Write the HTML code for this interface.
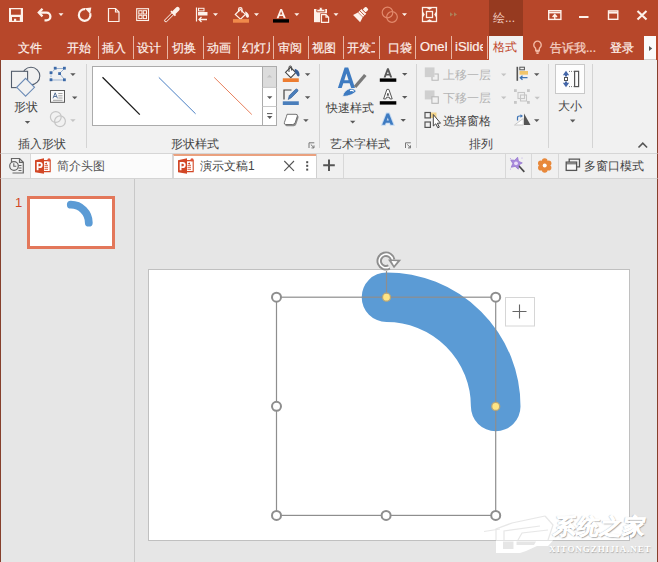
<!DOCTYPE html>
<html><head><meta charset="utf-8">
<style>
*{margin:0;padding:0;box-sizing:border-box}
html,body{width:658px;height:562px;overflow:hidden;background:#e6e6e6;font-family:"Liberation Sans",sans-serif;}
.a{position:absolute}
.t{position:absolute;white-space:nowrap;line-height:1}
#title{left:0;top:0;width:658px;height:36px;background:#b7472a}
#tabs{left:0;top:36px;width:658px;height:24px;background:#b7472a}
.tab{color:#fdf0ea;font-size:12px;top:41.5px;-webkit-text-stroke:0.2px #fdf0ea}
.sep{position:absolute;top:36px;width:1px;height:23px;background:#e9b4a2}
#ribbon{left:0;top:60px;width:658px;height:94px;background:#f1f1f1;border-left:1px solid #86402c;border-right:1px solid #86402c;border-bottom:1px solid #d6d6d6}
.gsep{position:absolute;top:64px;width:1px;height:84px;background:#d4d4d4}
.lbl{color:#444;font-size:12px}
#dtabs{left:0;top:154px;width:658px;height:25px;background:#f0f0f0;border-bottom:1px solid #d4d4d4;border-left:1px solid #86402c;border-right:1px solid #86402c}
#main{left:0;top:179px;width:658px;height:383px;background:#e6e6e6;border-left:1px solid #86402c;border-right:1px solid #86402c}
</style></head><body>
<div id="title" class="a"></div>
<div id="tabs" class="a"></div>
<svg class="a" style="left:0;top:0" width="658" height="36" viewBox="0 0 658 36">
<g fill="none" stroke="#fdf1ea" stroke-width="2">
<!-- save -->
<path fill="#fdf1ea" stroke="none" fill-rule="evenodd" d="M9 8H23V22H9Z M11 9.3H20.8V14.7H11Z M12 17H19.8V20.7H16.2V18.8H14V20.7H12Z"/>
<!-- undo -->
<path d="M42.5 8.8L38.8 12.6L42.5 16.4" stroke-width="2.3"/>
<path d="M39.2 12.6H46.5A3.9 3.9 0 0 1 46.5 20.4H44.5" stroke-width="2.3"/>
<!-- refresh -->
<path d="M85.2 9.2A5.8 5.8 0 1 0 90.2 13.3" stroke-width="2.2"/>
<!-- new doc -->
<path d="M108.5 8.5H115.5L119 12V21.5H108.5Z" stroke-width="1.2"/>
<path d="M115.5 8.5V12H119" stroke-width="1.2"/>
<!-- grid -->
<rect x="136.7" y="8.7" width="11.8" height="11.8" stroke-width="1.1"/>
<rect x="138.8" y="10.7" width="3.2" height="3.3" stroke-width="1"/>
<rect x="143.3" y="10.7" width="3.2" height="3.3" stroke-width="1"/>
<rect x="138.8" y="15.3" width="3.2" height="3.3" stroke-width="1"/>
<rect x="143.3" y="15.3" width="3.2" height="3.3" stroke-width="1"/>
<!-- eyedropper -->
<path d="M172.1 12.6L164.6 20.1Q164.2 21.9 166.4 21.9L173.9 14.4" stroke-width="1" fill="none"/>
<path d="M171 11.2L175.5 15.7" stroke-width="1.9"/>
<path d="M174.3 12.3L177.6 9" stroke-width="4.2" stroke-linecap="round"/>
<!-- align -->
<path d="M196.5 7.5V21.5" stroke-width="1.2"/>
<rect x="198.5" y="8.3" width="5.5" height="2.6" stroke-width="1"/>
<path d="M207 19.5H199M201.5 17L199 19.5L201.5 22" stroke-width="1.3"/>
<!-- A -->


<!-- frame -->
<rect x="422.5" y="7.5" width="14" height="14" stroke-width="1.3"/>
<rect x="426.5" y="11.5" width="6" height="6" stroke-width="1.3"/>
</g>
<g fill="#fdf1ea">
<path d="M198 12h9.5v3.5H198z"/>
<path d="M58.5 13.3h5l-2.5 2.6z"/>
<path d="M213 13.3h5l-2.5 2.6z"/>
<path d="M254 13.3h5l-2.5 2.6z"/>
<path d="M294.3 13.3h5l-2.5 2.6z"/>
<path d="M333.5 13.3h5l-2.5 2.6z"/>
<path d="M402 13.3h5l-2.5 2.6z"/>
<path d="M84.8 8.2L91.3 7.6L90.2 14z"/>
<g transform="translate(361.2 14) rotate(-45)"><rect x="4" y="-2.1" width="4.5" height="4.2" rx="1.2"/><rect x="-0.8" y="-3.4" width="4.6" height="6.8"/><path d="M-1.3 -3.4V3.4L-6.5 5V-5Z"/></g>
<g transform="translate(361.2 14) rotate(-45)" stroke="#b7472a" stroke-width="0.8"><path d="M1.3 -3.6V3.6M3.9 -2.2V2.2"/></g>
<!-- clipboard -->
<rect x="314" y="9" width="13" height="13.2"/>
<path d="M316.8 11.8V9.3H319.3V7.3H322.2V9.3H324.8V11.8Z" stroke="#b7472a" stroke-width="0.9"/>
<rect x="320.2" y="13.3" width="9.6" height="10.2" fill="#b7472a"/>
<path d="M321.5 14.6H326L328.6 17.2V22.3H321.5Z M326 14.6V17.2H328.6" fill="none" stroke="#fdf1ea" stroke-width="1.2"/>
<path d="M426 7.5h7l-3.5 2.3zM426 21.5h7l-3.5-2.3zM422.5 11h0v7l2.3-3.5zM436.5 11v7l-2.3-3.5z"/>
</g>
<!-- fill bucket -->
<path d="M235.3 14.5L240.4 9.4L245.4 14.4L240.5 19.2Z" fill="none" stroke="#fdf1ea" stroke-width="1.2"/>
<path d="M238.6 12V9.3Q238.6 7.6 240.3 7.6Q242 7.6 242 9.3V12.5" fill="none" stroke="#fdf1ea" stroke-width="1.3"/>
<path d="M245.2 11.2Q248.8 13 249 16.2Q248.6 18 247 17.8Q245.6 16.5 245.4 14.5Z" fill="#fdf1ea"/>
<rect x="233" y="19.1" width="16" height="3.6" fill="#f08a4b"/>
<rect x="273" y="19.2" width="16" height="3.4" fill="#000"/>
<path fill-rule="evenodd" fill="#fdf1ea" d="M276.6 18.3L280.3 8.9H282L285.8 18.3H283.7L282.9 16.1H279.4L278.6 18.3ZM280 14.5H282.3L281.15 11.3Z"/>
<!-- disabled circles -->
<g fill="none" stroke="#e2896c" stroke-width="1.2">
<circle cx="387.5" cy="12.5" r="5.3"/>
<circle cx="392" cy="17" r="5.3"/>
</g>
<g fill="#a89a6e" opacity="0.7">
<path d="M450 12.2l3 2.2l-3 2.2zM454 12.2l3 2.2l-3 2.2z"/>
</g>
<!-- window controls -->
<g fill="none" stroke="#fdf1ea" stroke-width="1.4">
<rect x="548.7" y="10.7" width="12.2" height="8.7"/>
<path d="M548.7 12.6H560.9" stroke-width="1.6"/>
<path d="M554.8 19.3V14.8M552.6 17L554.8 14.7L557 17" stroke-width="1.5"/>
<rect x="608.5" y="10.9" width="9.3" height="8.4"/>
<path d="M608.5 12.6H617.8" stroke-width="2"/>
<path d="M637.5 11L646.5 19.6M646.5 11L637.5 19.6" stroke-width="2.1"/>
</g>
<rect x="579" y="16" width="9.5" height="2" fill="#fdf1ea"/>
</svg>

<div class="a" style="left:489px;top:0;width:34px;height:36px;background:#963a20"></div>
<div class="t" style="left:493px;top:12px;font-size:12px;color:#f3cfc2">绘...</div>
<div class="a" style="left:489px;top:36px;width:34px;height:24px;background:#f1f1f1"></div>
<div class="t" style="left:493px;top:41px;font-size:12px;color:#c0452a">格式</div>

<div class="t tab" style="left:18px">文件</div>
<div class="t tab" style="left:67px">开始</div>
<div class="sep" style="left:98px"></div>
<div class="t tab" style="left:102px">插入</div>
<div class="sep" style="left:133px"></div>
<div class="t tab" style="left:137px">设计</div>
<div class="sep" style="left:167px"></div>
<div class="t tab" style="left:172px">切换</div>
<div class="sep" style="left:203px"></div>
<div class="t tab" style="left:207px">动画</div>
<div class="sep" style="left:238px"></div>
<div class="t tab" style="left:242px;width:27.5px;height:14px;overflow:hidden">幻灯片</div>
<div class="sep" style="left:273px"></div>
<div class="t tab" style="left:278px">审阅</div>
<div class="sep" style="left:308px"></div>
<div class="t tab" style="left:312px">视图</div>
<div class="sep" style="left:343px"></div>
<div class="t tab" style="left:347px;width:28px;overflow:hidden">开发工具</div>
<div class="sep" style="left:379px"></div>
<div class="t tab" style="left:388px">口袋</div>
<div class="sep" style="left:415px"></div>
<div class="t tab" style="left:420px;top:40px;width:27px;height:16px;overflow:hidden;font-size:13px">OneKey</div>
<div class="sep" style="left:451px"></div>
<div class="t tab" style="left:455px;top:40px;width:28px;height:16px;overflow:hidden;font-size:13px">iSlide</div>
<div class="sep" style="left:487px"></div>
<svg class="a" style="left:526px;top:36px" width="20" height="24"><g fill="none" stroke="#f2b8a3" stroke-width="1.4"><path d="M9.7 14.5V13.2Q9.7 12.3 8.9 11.5A3.7 3.7 0 1 1 14.1 11.5Q13.3 12.3 13.3 13.2V14.5Z"/><path d="M9.7 15.6H13.3M10.4 17.2H12.6"/></g></svg>
<div class="t tab" style="left:550px;top:42px;color:#f3c3b3">告诉我...</div>
<div class="t tab" style="left:610px">登录</div>
<div class="a" style="left:644px;top:36px;width:12px;height:24px;background:#fbfbfb;border-bottom:1px solid #d0d0d0"></div>
<svg class="a" style="left:644px;top:36px" width="12" height="24"><path d="M5 10L8.2 12.5L5 15Z" fill="#555"/></svg>

<div id="ribbon" class="a"></div>
<div class="gsep" style="left:86px"></div>
<div class="gsep" style="left:319px"></div>
<div class="gsep" style="left:416px"></div>
<div class="gsep" style="left:548px"></div>
<div class="gsep" style="left:592px"></div>
<div class="t lbl" style="left:14px;top:101px">形状</div>
<div class="t lbl" style="left:18px;top:138px">插入形状</div>
<div class="a" style="left:92px;top:66px;width:184px;height:60px;background:#fff;border:1px solid #ababab"></div>
<div class="t lbl" style="left:171px;top:138px">形状样式</div>
<div class="t lbl" style="left:326px;top:102px">快速样式</div>
<div class="t lbl" style="left:330px;top:138px">艺术字样式</div>
<div class="t lbl" style="left:443px;top:69px;color:#b4b4b4">上移一层</div>
<div class="t lbl" style="left:443px;top:92px;color:#b4b4b4">下移一层</div>
<div class="t lbl" style="left:443px;top:115px">选择窗格</div>
<div class="t lbl" style="left:469px;top:138px">排列</div>
<div class="a" style="left:555px;top:64px;width:30px;height:30px;background:#fafafa;border:1px solid #d2d2d2"></div>
<div class="t lbl" style="left:558px;top:100px">大小</div>

<div id="dtabs" class="a"></div>
<div class="a" style="left:31px;top:154px;width:142px;height:24px;background:#fbfbfb;border-right:1px solid #d8d8d8"></div>
<div class="a" style="left:30px;top:154px;width:1px;height:24px;background:#d8d8d8"></div>
<div class="a" style="left:316px;top:154px;width:1px;height:24px;background:#d0d0d0"></div>
<div class="a" style="left:343px;top:154px;width:1px;height:24px;background:#d8d8d8"></div>
<div class="a" style="left:505px;top:154px;width:1px;height:24px;background:#d8d8d8"></div>
<div class="a" style="left:531px;top:154px;width:1px;height:24px;background:#d8d8d8"></div>
<div class="a" style="left:558px;top:154px;width:1px;height:24px;background:#d8d8d8"></div>
<svg class="a" style="left:0;top:0;width:0;height:0"><defs><g id="ppt">
<path d="M8.5 2.6H15.2V13.6H8.5" fill="#fff" stroke="#d24726" stroke-width="1.1"/>
<path d="M9.5 7.3H13M9.5 9.3H13M9.5 11.3H13" stroke="#d24726" stroke-width="0.9"/>
<path d="M9.5 5.5L12 4.5V6.5Z" fill="#d24726"/>
<circle cx="14" cy="1.8" r="1.6" fill="#e0543a"/>
<path d="M0 2.2L9 0.3V15.7L0 14.3Z" fill="#d24726"/>
<path d="M2.6 12.2V4.8H4.8Q6.8 4.8 6.8 6.9Q6.8 9.1 4.8 9.1H3.6" fill="none" stroke="#fff" stroke-width="1.8"/>
</g></defs></svg>
<svg class="a" style="left:35px;top:158px" width="17" height="16"><use href="#ppt"/></svg>
<div class="t" style="left:57px;top:160px;font-size:12px;color:#555">简介头图</div>
<div class="a" style="left:173px;top:154px;width:143px;height:24px;background:#fff;border-top:2px solid #eaa17f;border-left:1px solid #d8d8d8"></div>
<svg class="a" style="left:178px;top:158px" width="17" height="16"><use href="#ppt"/></svg>
<div class="t" style="left:200px;top:160px;font-size:12px;color:#444">演示文稿1</div>
<div class="t" style="left:584px;top:160px;font-size:12px;color:#444">多窗口模式</div>

<svg class="a" style="left:0;top:0" width="658" height="180" viewBox="0 0 658 180">
<!-- shapes -->
<circle cx="31" cy="76" r="8.8" fill="none" stroke="#535d6c" stroke-width="1.1"/>
<rect x="11.5" y="71.3" width="16.1" height="16.3" fill="#f1f1f1" stroke="#535d6c" stroke-width="1.1"/>
<path d="M25.6 78.3L34.5 87.3L25.6 96.2L16.7 87.3Z" fill="#f1f1f1" stroke="#6b8bb6" stroke-width="1.1"/>
<!-- gallery scroll -->
<rect x="262.5" y="66.5" width="14" height="59" fill="#fff" stroke="#ababab" stroke-width="1"/>
<rect x="263" y="67" width="13" height="20.4" fill="#dcdcdc"/>
<path d="M262.5 87.4H276.5M262.5 106.5H276.5" stroke="#c8c8c8" stroke-width="1"/>
<!-- dropdown arrows (dark) -->
<g fill="#595959">
<path d="M24.8 121h5.4l-2.7 2.8z"/>
<path d="M70.2 73.3h5.4l-2.7 2.8z"/>
<path d="M72 96.4h5.4l-2.7 2.8z"/>
<path d="M267 96.3h5.4l-2.7 2.8z"/>
<path d="M267 116.1h5.4l-2.7 2.8z"/>
<path d="M304.9 73.3h5.4l-2.7 2.8z"/>
<path d="M304.9 96.3h5.4l-2.7 2.8z"/>
<path d="M303.2 119.3h5.4l-2.7 2.8z"/>
<path d="M350 120.8h5.4l-2.7 2.8z"/>
<path d="M402 73h5.4l-2.7 2.8z"/>
<path d="M402 96h5.4l-2.7 2.8z"/>
<path d="M400.5 119h5.4l-2.7 2.8z"/>
<path d="M534 73.3h5.4l-2.7 2.8z"/>
<path d="M534 119.2h5.4l-2.7 2.8z"/>
<path d="M570 119.6h5.4l-2.7 2.8z"/>
</g>
<g fill="#c4c4c4">
<path d="M70.2 119.3h5.4l-2.7 2.8z"/>
<path d="M501 73.5h5.4l-2.7 2.8z"/>
<path d="M501 96.5h5.4l-2.7 2.8z"/>
<path d="M534.5 96.8h5.4l-2.7 2.8z"/>
<path d="M266.8 77.5h5.4l-2.7 -2.8z"/>
</g>
<path d="M267 113.6h5.4" stroke="#595959" stroke-width="1"/>
<!-- edit points -->
<g stroke="#9bb3d3" stroke-width="1" fill="none">
<path d="M51.5 73L55.5 68.5" stroke-dasharray="1.5 1"/>
<path d="M55.5 68.5H64.5"/>
<path d="M64.5 68.5L59.5 73.5L64.5 79.5"/>
<path d="M51 80H64.5"/>
<path d="M51 73V80" stroke-dasharray="1.5 1"/>
</g>
<g fill="#3d6aa8">
<rect x="53.8" y="66.8" width="2.8" height="2.8"/>
<rect x="63" y="66.8" width="2.8" height="2.8"/>
<rect x="49.6" y="71.3" width="2.8" height="2.8"/>
<rect x="58.2" y="72.2" width="2.8" height="2.8"/>
<rect x="49.6" y="78.4" width="2.8" height="2.8"/>
<rect x="63" y="78.4" width="2.8" height="2.8"/>
</g>
<!-- textbox -->
<rect x="50.5" y="90.5" width="14" height="11.8" fill="#fafafa" stroke="#5a5a5a" stroke-width="1"/>
<path d="M53 98.3L55.2 92.8L57.4 98.3M53.8 96.5H56.6" fill="none" stroke="#4a6690" stroke-width="0.9"/>
<path d="M58.3 93.5H62.5M58.3 95.8H62.5M58.3 98H62.5M53 100.3H62.5" stroke="#8a8a8a" stroke-width="0.8"/>
<!-- merge (disabled) -->
<g fill="none" stroke="#c6c6c6" stroke-width="1.2">
<circle cx="55.8" cy="117" r="5.4"/>
<circle cx="60" cy="121.3" r="5.4"/>
</g>
<!-- gallery lines -->
<path d="M102.5 77.3L139.8 114.6" stroke="#1a1a1a" stroke-width="1.3"/>
<path d="M158.8 77.4L195.6 113.8" stroke="#4a7fc4" stroke-width="1"/>
<path d="M214.2 77.4L251.8 114.5" stroke="#e4704a" stroke-width="0.9"/>
<!-- fill icon -->
<path d="M285.5 72.3L290.5 67.3L295.8 72.6L290.8 77.6Z" fill="#fff" stroke="#444" stroke-width="1.1"/>
<path d="M289 72V67.3Q289 66 290.3 66Q291.6 66 291.6 67.3V70.5" fill="none" stroke="#444" stroke-width="1"/>
<path d="M294.8 68.8Q299.6 70.2 299.6 75.3Q299 77.2 297.2 75.8Q296.3 73.5 294.8 72.5Z" fill="#3a5f95"/>
<rect x="282.8" y="78.3" width="16" height="3.7" fill="#ed7d31"/>
<!-- outline icon -->
<path d="M284 99.5V90H291.5" fill="none" stroke="#444" stroke-width="1.2"/>
<path d="M288.2 99.5L289.3 95.6L295.6 89.3Q296.6 88.5 297.6 89.5Q298.4 90.5 297.6 91.4L291.4 97.7Z" fill="#4a7ebb" stroke="#2f5a94" stroke-width="0.6"/>
<rect x="282.8" y="101.3" width="16" height="3.7" fill="#4a7ebb"/>
<!-- effects icon -->
<path d="M288 115.8H297.2Q299.2 115.8 298.5 117.8L296.3 124.3Q295.6 126.3 293.6 126.3H286.7Q284.7 126.3 285.4 124.3L287.6 117.8Q288.1 115.8 288 115.8Z" fill="#8c8c8c"/>
<path d="M287 114.3H296Q298 114.3 297.3 116.3L295.2 122.5Q294.5 124.5 292.5 124.5H285.7Q283.7 124.5 284.4 122.5L286.5 116.3Q287 114.3 287 114.3Z" fill="#fff" stroke="#666" stroke-width="0.9"/>
<!-- launchers -->
<g fill="none" stroke="#777" stroke-width="1">
<path d="M309 148V142.8H314.3"/>
<path d="M310.8 144.5L314 147.7M311.5 147.9H314V145.4"/>
<path d="M405.5 148V142.8H410.8"/>
<path d="M407.3 144.5L410.5 147.7M408 147.9H410.5V145.4"/>
</g>
<!-- caret ^ -->
<path d="M638.5 147.5L642.8 143.2L647.1 147.5" fill="none" stroke="#555" stroke-width="1.6"/>
<!-- quick styles -->
<path fill-rule="evenodd" fill="#3e7bc1" d="M337.9 88.1L344.6 67.5H348.2L355.0 88.1H351.2L349.6 83.3H343.3L341.7 88.1ZM344.3 80.3H348.6L346.4 73.6Z"/>
<path d="M355 87L365.3 75" stroke="#7a7a7a" stroke-width="3.4"/>
<path d="M342.7 96.6Q343.5 90.5 350 88.5Q354.8 88 356 91.3Q353 95.8 342.7 96.6Z" fill="#3e7bc1" stroke="#f1f1f1" stroke-width="0.8"/>
<path d="M350 90.6Q352.5 90 353.8 91.3" stroke="#fff" stroke-width="1.1" fill="none"/>
<!-- text fill A -->
<path fill-rule="evenodd" fill="#595959" d="M383.6 77.6L387.1 68.2H388.7L392.2 77.6H390.2L389.4 75.6H386.4L385.6 77.6ZM387.0 74.0H388.8L387.9 71.5Z"/>
<rect x="379.8" y="78.4" width="16.5" height="3.4" fill="#000"/>
<path fill-rule="evenodd" fill="#fff" stroke="#555" stroke-width="1" d="M383.6 98.9L386.9 89.4H388.9L392.2 98.9H389.9L389.3 97.2H386.5L385.9 98.9ZM387.2 95.3H388.6L387.9 93.2Z"/>
<rect x="379.8" y="101.2" width="16.5" height="3.4" fill="#000"/>
<path fill-rule="evenodd" fill="#3e7bc1" stroke="#c5daf2" stroke-width="2" d="M382.2 124.8L386.6 113.4H389.0L393.4 124.8H390.6L389.8 122.7H385.8L385.0 124.8ZM386.7 120.5H388.9L387.8 117.5Z"/>
<path fill-rule="evenodd" fill="#3e7bc1" d="M382.2 124.8L386.6 113.4H389.0L393.4 124.8H390.6L389.8 122.7H385.8L385.0 124.8ZM386.7 120.5H388.9L387.8 117.5Z"/>
<!-- bring forward / send back -->
<rect x="424.8" y="67.4" width="9.7" height="9.7" fill="#cfcfcf"/>
<path d="M434.5 74H438.2V80.2H432V77.1" fill="none" stroke="#b8b8b8" stroke-width="1.1"/>
<rect x="424.8" y="90.4" width="9.7" height="9" fill="#cfcfcf"/>
<rect x="431.9" y="96.8" width="6.4" height="6.5" fill="#f1f1f1" stroke="#b8b8b8" stroke-width="1.1"/>
<!-- selection pane -->
<g fill="none" stroke="#555" stroke-width="1.2">
<rect x="425" y="112.5" width="5.4" height="5.4"/>
<rect x="425" y="122" width="5.4" height="5.4"/>
</g>
<rect x="431" y="112.5" width="5.5" height="5.5" fill="#f4d48a"/>
<path d="M433.3 114.5V126L435.8 123.8L437.8 127.8L439.3 127.1L437.4 123.2H440.5Z" fill="#fff" stroke="#444" stroke-width="1"/>
<!-- align -->
<path d="M517.3 66.8V80.8" stroke="#555" stroke-width="1.6"/>
<rect x="519.8" y="67.2" width="4.6" height="2.6" fill="none" stroke="#555" stroke-width="1"/>
<rect x="519.5" y="71" width="8.5" height="3.7" fill="#f0c56c"/>
<path d="M527.5 77.7H520.3M522.5 75.7L520.3 77.7L522.5 79.7" fill="none" stroke="#3d73b5" stroke-width="1.3"/>
<!-- group disabled -->
<g fill="#c6c6c6">
<rect x="514" y="89.2" width="2.8" height="2.8"/><rect x="527" y="89.2" width="2.8" height="2.8"/>
<rect x="514" y="101" width="2.8" height="2.8"/><rect x="527" y="101" width="2.8" height="2.8"/>
</g>
<g fill="none" stroke="#c6c6c6" stroke-width="1.1">
<rect x="518" y="92.5" width="6.5" height="6"/><rect x="520.5" y="95" width="6" height="6"/>
</g>
<!-- arrange rotate -->
<path d="M514.5 125L523.3 118.5V125Z" fill="#fff" stroke="#c8c8c8" stroke-width="1"/>
<path d="M524 113.5L530.5 125H524Z" fill="#555"/>
<path d="M517.5 120.5V117.8Q517.5 116 519.5 116H521" fill="none" stroke="#3d73b5" stroke-width="1.2"/>
<path d="M520.5 114.2L523 116L520.5 117.8Z" fill="#3d73b5"/>
<!-- size -->
<rect x="555.5" y="64.5" width="29" height="29" fill="#fdfdfd" stroke="#c9c9c9" stroke-width="1"/>
<rect x="574.6" y="71.3" width="4" height="15.3" fill="none" stroke="#555" stroke-width="1.2"/>
<path d="M569 71.4H573.5M569 86.6H573.5" stroke="#777" stroke-width="1" stroke-dasharray="1 1"/>
<g fill="#4466a8">
<path d="M562.8 75.2L566 70.8L569.2 75.2Z"/><rect x="565" y="74.5" width="2" height="2"/>
<path d="M562.8 82.8L566 87.2L569.2 82.8Z"/><rect x="565" y="81.5" width="2" height="2"/>
</g>
<rect x="564.5" y="77.5" width="3" height="3" fill="none" stroke="#555" stroke-width="1"/>
<!-- doc tab bar icons -->
<g fill="none" stroke="#666" stroke-width="1.2">
<path d="M11.5 162V158.5H19.5L23.3 162.3V173H12.5"/>
<path d="M19.5 158.5V162.3H23.3"/>
<path d="M18.5 165.5H21.5M18.5 168H21.5M18.5 170.5H21.5" stroke-width="1"/>
</g>
<circle cx="14" cy="166" r="4.3" fill="#f0f0f0" stroke="#666" stroke-width="1.2"/>
<path d="M13.8 163.3V166.3H16.3" fill="none" stroke="#666" stroke-width="1.1"/>
<path d="M284.3 161L294 170.8M294 161L284.3 170.8" stroke="#555" stroke-width="1.1"/>
<g fill="#505050"><rect x="306.2" y="161.2" width="2" height="2"/><rect x="306.2" y="164.8" width="2" height="2"/><rect x="306.2" y="168.6" width="2" height="2"/></g>
<path d="M323.2 165.2H334.8M329 159.4V171" stroke="#555" stroke-width="2"/>
<!-- wand -->
<path d="M518.5 165.5L524.3 171.8" stroke="#4a4a4a" stroke-width="1.7"/>
<path d="M517.6 157.2L518.5 161.3L522.3 162.9L518.7 165.0L518.3 169.2L515.2 166.4L511.2 167.3L512.8 163.5L510.7 159.9L514.8 160.3Z" fill="#a889dc" stroke="#9474cf" stroke-width="0.7"/>
<circle cx="516" cy="163.3" r="1.9" fill="#e9def8"/>
<g fill="#b9a3e3"><circle cx="510.5" cy="158.5" r="0.6"/><circle cx="522" cy="158" r="0.6"/><circle cx="510.5" cy="169" r="0.6"/></g>
<!-- flower -->
<g fill="#e8883a">
<circle cx="544.7" cy="161" r="2.8"/><circle cx="548.6" cy="163.2" r="2.8"/><circle cx="548.6" cy="167.7" r="2.8"/>
<circle cx="544.7" cy="170" r="2.8"/><circle cx="540.8" cy="167.7" r="2.8"/><circle cx="540.8" cy="163.2" r="2.8"/>
<circle cx="544.7" cy="165.5" r="4"/>
</g>
<circle cx="544.7" cy="165.5" r="2" fill="#fff"/>
<!-- window icon -->
<path d="M569.2 161.9V159.1H579.5V166.8H576.7" fill="none" stroke="#555" stroke-width="1.3"/>
<rect x="566.2" y="162.1" width="10.4" height="8.3" fill="#f7f7f7" stroke="#555" stroke-width="1.3"/>
<path d="M566.2 163.8H576.6" stroke="#555" stroke-width="1"/>
</svg>

<div id="main" class="a"></div>
<div class="a" style="left:134px;top:179px;width:1px;height:383px;background:#c8c8c8"></div>
<div class="t" style="left:15px;top:196px;font-size:13px;color:#d24726">1</div>
<div class="a" style="left:27px;top:196px;width:88px;height:53px;background:#fff;border:3px solid #e3775a"></div>
<div class="a" style="left:148px;top:269px;width:482px;height:272px;background:#fff;border:1px solid #c0c0c0"></div>
<svg class="a" style="left:0;top:0" width="658" height="562" viewBox="0 0 658 562">
<path d="M386.5 297.2A109.2 109.2 0 0 1 495.7 406.4" fill="none" stroke="#5b9bd5" stroke-width="49.6" stroke-linecap="round"/>
<g fill="none" stroke="#8e8e8e" stroke-width="1.2">
<rect x="276.5" y="297.2" width="219.2" height="218.2"/>
<path d="M386.5 271V297"/>
</g>
<g fill="#fff" stroke="#8e8e8e" stroke-width="2">
<circle cx="276.5" cy="297.2" r="4.5"/>
<circle cx="495.7" cy="297.2" r="4.5"/>
<circle cx="276.5" cy="406.3" r="4.5"/>
<circle cx="276.5" cy="515.4" r="4.5"/>
<circle cx="386.1" cy="515.4" r="4.5"/>
<circle cx="495.7" cy="515.4" r="4.5"/>
</g>
<g fill="#ffe584" stroke="#b5a57a" stroke-width="1.3">
<circle cx="386.5" cy="297.2" r="4"/>
<circle cx="495.7" cy="406.4" r="4"/>
</g>
<!-- rotate handle -->
<path d="M389.19 267.00A6.8 6.8 0 1 1 392.70 259.82" fill="none" stroke="#8e8e8e" stroke-width="5.4"/>
<path d="M389.19 267.00A6.8 6.8 0 1 1 392.70 259.82" fill="none" stroke="#fff" stroke-width="1.6"/>
<path d="M388 259.5L401.2 259.8L394 268.2Z" fill="#8e8e8e"/>
<path d="M391.5 261L397.5 261.2L394 265.5Z" fill="#fff"/>
<!-- plus button -->
<rect x="505.5" y="297.5" width="29" height="28.5" fill="#fff" stroke="#d6d6d6" stroke-width="1"/>
<path d="M512.5 311.5H526.5M519.5 304.5V318.5" stroke="#666" stroke-width="1.1"/>
<!-- thumbnail arc -->
<path d="M70.8 204.7A18 18 0 0 1 88.8 222.7" fill="none" stroke="#5b9bd5" stroke-width="7.8" stroke-linecap="round"/>
</svg>
<!-- watermark -->
<svg class="a" style="left:0;top:0" width="658" height="562">
<path fill="#fff" fill-rule="evenodd" d="M496 540.5H553L548 546H537L526 551L520 553H496Z M503 541.5H513.5V549H503Z M516.5 541.5H536L534 545H516.5Z"/>
<g fill="none" stroke="#e2e2e2" stroke-width="1.2" opacity="0.8">
<path d="M484 531.5L500 529"/>
<path d="M496 540V529L512 523L545 516"/>
<path d="M504 540V531L540 526"/>
<path d="M518 540L522 533L548 530"/>
<path d="M545 516L553 525L548 540"/>
</g>
</svg>
<div class="t" style="left:554px;top:516px;font-size:22px;font-weight:900;color:#fff;-webkit-text-stroke:0.6px #fff;letter-spacing:1px;transform:skewX(-10deg);text-shadow:1px 1px 1px rgba(60,60,60,0.45),-0.5px 0 1px rgba(60,60,60,0.3)">系统之家</div>
<div class="t" style="left:549px;top:545px;font-family:'Liberation Serif',serif;font-size:9px;font-weight:bold;color:#fff;letter-spacing:0.9px;text-shadow:0.5px 0.5px 1px rgba(80,80,80,0.4)">XITONGZHIJIA.NET</div>
</body></html>
